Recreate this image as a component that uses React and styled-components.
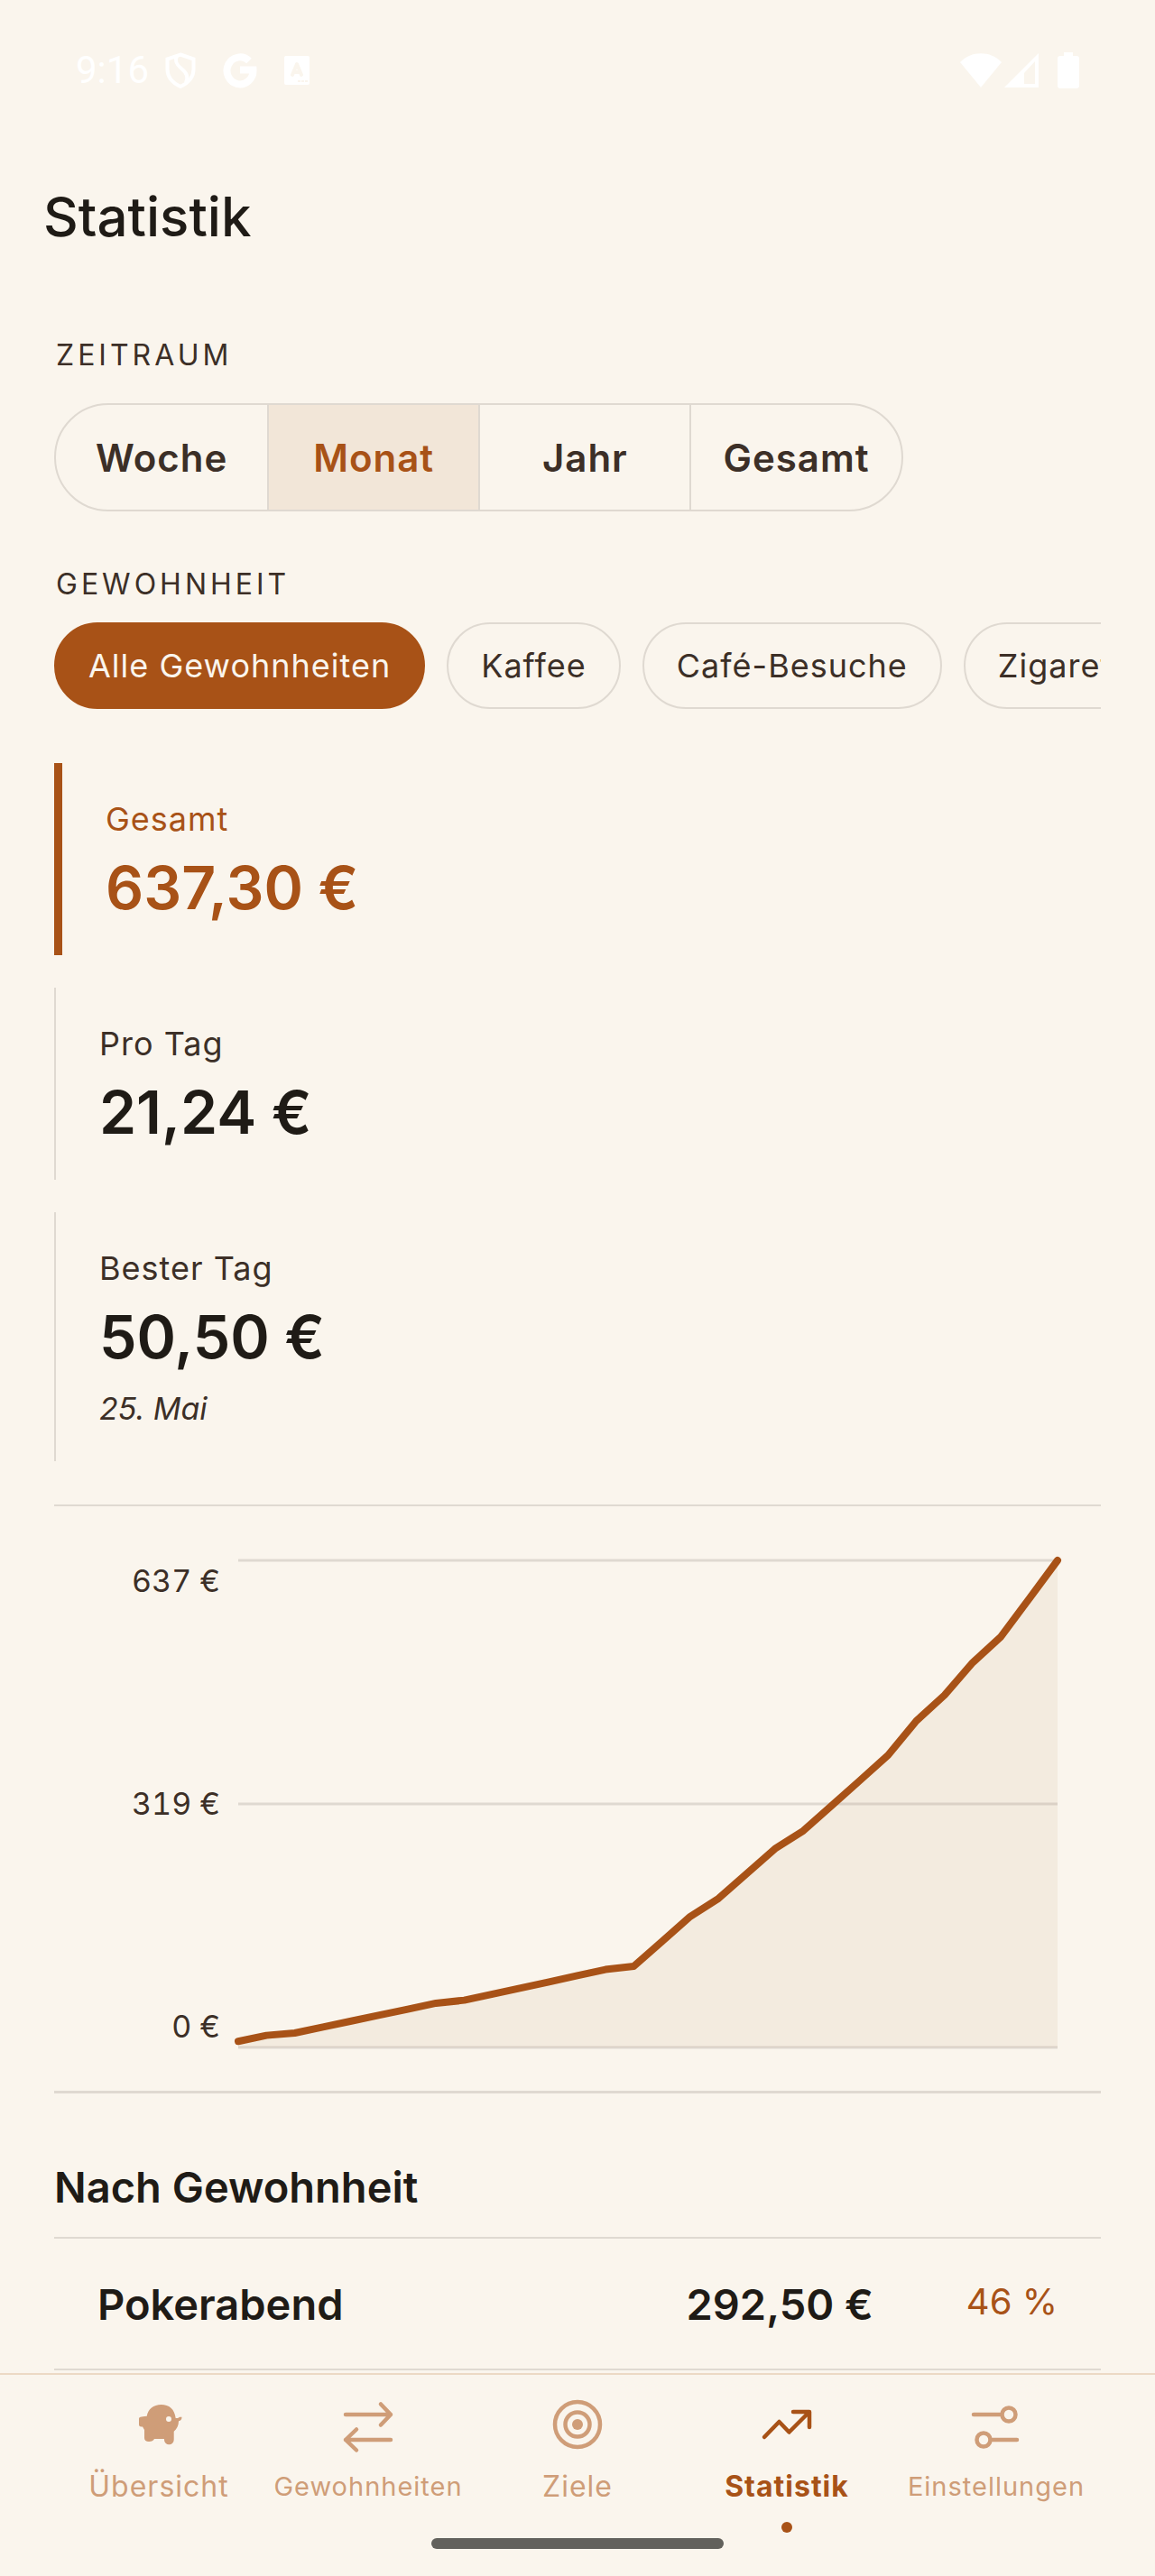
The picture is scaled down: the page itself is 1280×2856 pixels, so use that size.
import React, { useState } from 'react'
import styled, { createGlobalStyle, css } from 'styled-components'

const colors = {
  paper: '#faf5ed',
  ink: '#1f1b16',
  body: '#3c2f27',
  accent: '#a85217',
  accentMuted: '#cf9d78',
  accentTint: '#f2e6d8',
  area: '#be916b',
  line: '#dfd9d1',
  navLine: '#ecd9c5',
  white: '#fff',
}

const GlobalStyle = createGlobalStyle`
  *, *::before, *::after {
    box-sizing: border-box;
  }

  body {
    margin: 0;
    background: ${colors.paper};
    color: ${colors.ink};
    font-family: Inter, 'Liberation Sans', sans-serif;
  }

  h1, h2, p, dl, dt, dd {
    margin: 0;
  }

  button {
    font: inherit;
    color: inherit;
    background: none;
    border: 0;
    cursor: pointer;
  }
`

const Screen = styled.div`
  display: flex;
  flex-direction: column;
  height: 100vh;
  overflow: hidden;
`

// Status bar

const StatusBar = styled.header`
  flex: none;
  display: flex;
  justify-content: space-between;
  align-items: center;
  height: 156px;
  padding: 0 84px;
  color: ${colors.white};
`

const StatusGroup = styled.div`
  display: flex;
  align-items: center;
  gap: ${p => p.$gap}px;
`

const Clock = styled.time`
  font-family: Roboto, sans-serif;
  font-size: 42px;
  line-height: 48px;
`

const ShieldIcon = () => (
  <svg width="34" height="40" viewBox="0 0 34 40" fill="none" stroke="currentColor" strokeWidth="4">
    <path d="M17 2.500 31.500 7.500v11.500c0 9-6 15-14.500 19C8.500 34 2.500 28 2.500 19V7.500z" />
    <path d="M13 4c-3 6 0 10 5 14 6 5 8 9 5 16" />
  </svg>
)

const GoogleIcon = () => (
  <svg width="38" height="40" viewBox="0 0 38 40" fill="none" stroke="currentColor" strokeWidth="8">
    <path d="M29 9.500A14.500 15 0 1 0 33.500 19.500H19" />
  </svg>
)

const LetterIcon = () => (
  <svg width="28" height="32" viewBox="0 0 28 32">
    <rect width="28" height="32" rx="2" fill="currentColor" />
    <path d="M9 21l5-12 5 12M11 18h6" fill="none" stroke={colors.paper} strokeWidth="4" strokeLinecap="round" strokeLinejoin="round" />
    <path d="M15 28h11" stroke={colors.paper} strokeWidth="2" strokeDasharray="3 1" />
  </svg>
)

const WifiIcon = () => (
  <svg width="46" height="38" viewBox="0 0 46 38" fill="currentColor">
    <path d="M0 10C12-3 34-3 46 10L23 38z" />
  </svg>
)

const SignalIcon = () => (
  <svg width="38" height="38" viewBox="0 0 38 38" fill="currentColor" fillRule="evenodd">
    <path d="M38 0v38H0zM34 9 22 22v12h12z" />
  </svg>
)

const BatteryIcon = () => (
  <svg width="24" height="40" viewBox="0 0 24 40" fill="currentColor">
    <path d="M7 0h10v4h4a3 3 0 0 1 3 3v30a3 3 0 0 1-3 3H3a3 3 0 0 1-3-3V7a3 3 0 0 1 3-3h4z" />
  </svg>
)

// Content

const Title = styled.h1`
  flex: none;
  padding: 48px 48px 0;
  font-size: 60px;
  font-weight: 500;
  line-height: 72px;
`

const Content = styled.main`
  flex: 1;
  min-height: 0;
  overflow: hidden;
  padding: 94px 60px 0;
`

const Overline = styled.h2`
  padding-left: 2px;
  font-size: 32px;
  font-weight: 400;
  line-height: 48px;
  letter-spacing: 4px;
  text-transform: uppercase;
  color: ${colors.body};
`

const Segments = styled.div`
  display: grid;
  grid-template-columns: repeat(4, 1fr);
  width: max-content;
  height: 120px;
  margin: 29px 0 57px;
  border: 2px solid ${colors.line};
  border-radius: 60px;
  overflow: hidden;
`

const Segment = styled.button`
  padding: 0 35px;
  font-size: 42px;
  font-weight: 600;
  letter-spacing: 1px;
  color: ${colors.body};

  & + & {
    border-left: 2px solid ${colors.line};
  }

  ${p =>
    p.$active &&
    css`
      color: ${colors.accent};
      background: ${colors.accentTint};
    `}
`

const Chips = styled.div`
  display: flex;
  gap: 24px;
  margin: 18px 0 60px;
  overflow-x: auto;
  scrollbar-width: none;
`

const Chip = styled.button`
  flex: none;
  height: 96px;
  padding: 0 36px;
  border: 2px solid ${colors.line};
  border-radius: 48px;
  font-size: 36px;
  letter-spacing: 1px;
  color: ${colors.body};
  white-space: nowrap;

  ${p =>
    p.$active &&
    css`
      color: ${colors.paper};
      background: ${colors.accent};
      border-color: ${colors.accent};
    `}
`

const Stats = styled.dl`
  display: flex;
  flex-direction: column;
  gap: 36px;
`

const Stat = styled.div`
  padding: 38px 48px 33px;
  border-left: 2px solid ${colors.line};
  color: ${colors.ink};

  ${p =>
    p.$accent &&
    css`
      border-left: 9px solid ${colors.accent};
      color: ${colors.accent};
    `}
`

const StatLabel = styled.dt`
  font-size: 36px;
  line-height: 48px;
  letter-spacing: 1px;
  color: ${p => (p.$accent ? colors.accent : colors.body)};
`

const StatValue = styled.dd`
  padding-top: 10px;
  font-size: 66px;
  font-weight: 600;
  line-height: 84px;
`

const StatNote = styled.dd`
  padding-top: 13px;
  font-size: 34px;
  font-style: italic;
  line-height: 50px;
  color: ${colors.body};
`

const ChartPanel = styled.section`
  display: flex;
  gap: 20px;
  margin-top: 48px;
  padding: 59px 48px 47px;
  border-top: 2px solid ${colors.line};
  border-bottom: 3px solid ${colors.line};
`

const ChartLabels = styled.div`
  display: flex;
  flex-direction: column;
  justify-content: space-between;
  width: 136px;
  font-size: 34px;
  font-variant-numeric: tabular-nums;
  line-height: 48px;
  text-align: right;
  white-space: nowrap;
  color: ${colors.body};
`

const ChartCanvas = styled.svg`
  flex: 1;
  min-width: 0;
  height: 542px;
  overflow: visible;
`

const SectionTitle = styled.h2`
  padding: 74px 0 25px;
  font-size: 47px;
  font-weight: 600;
  line-height: 60px;
`

const HabitTable = styled.table`
  width: 100%;
  border-collapse: collapse;

  tr {
    height: 146px;
    border-top: 2px solid ${colors.line};
    border-bottom: 2px solid ${colors.line};
  }

  th,
  td {
    padding: 0;
    font-size: 47px;
    font-weight: 600;
    text-align: right;
    white-space: nowrap;
  }

  th {
    padding-left: 48px;
    text-align: left;
  }

  td:last-child {
    width: 252px;
    padding-right: 48px;
    padding-bottom: 6px;
    font-size: 40px;
    font-weight: 400;
    color: ${colors.accent};
  }
`

// Bottom navigation

const NavBar = styled.nav`
  flex: none;
  border-top: 2px solid ${colors.navLine};
  padding: 0 60px 30px;
`

const NavList = styled.div`
  display: grid;
  grid-template-columns: repeat(5, minmax(0, 1fr));
`

const NavLink = styled.a`
  display: flex;
  flex-direction: column;
  align-items: center;
  padding-top: 20px;
  font-size: ${p => (p.$small ? 29 : 32)}px;
  font-weight: ${p => (p.$active ? 700 : 400)};
  line-height: 48px;
  letter-spacing: 1px;
  text-decoration: none;
  white-space: nowrap;
  color: ${p => (p.$active ? colors.accent : colors.accentMuted)};

  svg {
    margin-bottom: 8px;
  }
`

const ActiveDot = styled.span`
  width: 12px;
  height: 12px;
  margin-top: 15px;
  border-radius: 50%;
  background: ${p => (p.$active ? colors.accent : 'transparent')};
`

const HomeHandle = styled.div`
  width: 324px;
  height: 12px;
  margin: 6px auto 0;
  border-radius: 6px;
  background: #62615c;
`

const NavIcon = ({ children }) => (
  <svg
    width="72"
    height="72"
    viewBox="0 0 72 72"
    fill="none"
    stroke="currentColor"
    strokeWidth="4.500"
    strokeLinecap="round"
    strokeLinejoin="round"
  >
    {children}
  </svg>
)

const PiggyIcon = () => (
  <NavIcon>
    <path
      d="M22.700 25.700C24 18 30 13 38.700 13S53.500 18 54.700 28c2 .3 3.300-.2 4.300-1.300l2.500 0c0 2.500-1 4-3.500 4.500 0 5-2 8.500-5.300 11.500V52a5.300 5.300 0 0 1-10.700 0v-1H31c-1 2-3 3-6 3s-5-1.500-5-4V41l-2-3.500c-3 0-4-.5-4-2.500v-6c0-2.500 2-2.500 8.700-3.300z"
      fill="currentColor"
      stroke="none"
    />
    <circle cx="47" cy="29" r="3" fill={colors.paper} stroke="none" />
  </NavIcon>
)

const SwapIcon = () => (
  <NavIcon>
    <path d="M11 24h50M50 12.500l11 11.500-11 11.500M61 52H11M23 40.500 11 52l12 11.500" />
  </NavIcon>
)

const TargetIcon = () => (
  <NavIcon>
    <circle cx="36" cy="35" r="25" />
    <circle cx="36" cy="35" r="13.500" />
    <circle cx="36" cy="35" r="6" fill="currentColor" stroke="none" />
  </NavIcon>
)

const TrendIcon = () => (
  <NavIcon>
    <path d="M11 49 27.500 32 38.500 43.500 60 22M43 21H61V38" />
  </NavIcon>
)

const SlidersIcon = () => (
  <NavIcon>
    <path d="M11 24H42M30 52H59" />
    <circle cx="50" cy="24" r="7.500" />
    <circle cx="22" cy="52" r="7.500" />
  </NavIcon>
)

const periods = ['Woche', 'Monat', 'Jahr', 'Gesamt']
const habits = ['Alle Gewohnheiten', 'Kaffee', 'Café-Besuche', 'Zigaretten']

const navItems = [
  { label: 'Übersicht', icon: PiggyIcon },
  { label: 'Gewohnheiten', icon: SwapIcon, small: true },
  { label: 'Ziele', icon: TargetIcon },
  { label: 'Statistik', icon: TrendIcon, active: true },
  { label: 'Einstellungen', icon: SlidersIcon, small: true },
]

// Running total per day of the month
const totals = [
  8, 15.8, 18.9, 26.7, 34.5, 42.3, 50.1, 57.9, 61.8, 69.8, 77.8, 85.8, 94, 102,
  106.3, 138.8, 171.3, 194.9, 227.4, 260, 283.5, 316.3, 349.2, 382.3, 427.3,
  461, 503.7, 537.6, 587.4, 637.3,
]

const Chart = () => {
  const max = totals[totals.length - 1]
  const line = totals
    .map((v, i) => `${(i / (totals.length - 1)) * 908},${541 - (v / max) * 540}`)
    .join(' ')

  return (
    <ChartPanel aria-label="Verlauf">
      <ChartLabels>
        <span>637 €</span>
        <span>319 €</span>
        <span>0 €</span>
      </ChartLabels>
      <ChartCanvas viewBox="0 0 908 542" preserveAspectRatio="none">
        {[1, 271, 541].map(y => (
          <path key={y} d={`M0 ${y}H908`} stroke={colors.line} strokeWidth="3" />
        ))}
        <polygon points={`0,541 ${line} 908,541`} fill={colors.area} fillOpacity="0.1" />
        <polyline
          points={line}
          fill="none"
          stroke={colors.accent}
          strokeWidth="8"
          strokeLinecap="round"
          strokeLinejoin="round"
          vectorEffect="non-scaling-stroke"
        />
      </ChartCanvas>
    </ChartPanel>
  )
}

const App = () => {
  const [period, setPeriod] = useState('Monat')
  const [habit, setHabit] = useState(habits[0])

  return (
    <Screen>
      <GlobalStyle />
      <StatusBar>
        <StatusGroup $gap={18}>
          <Clock>9:16</Clock>
          <StatusGroup $gap={30}>
            <ShieldIcon />
            <GoogleIcon />
            <LetterIcon />
          </StatusGroup>
        </StatusGroup>
        <StatusGroup $gap={3}>
          <WifiIcon />
          <StatusGroup $gap={21}>
            <SignalIcon />
            <BatteryIcon />
          </StatusGroup>
        </StatusGroup>
      </StatusBar>

      <Title>Statistik</Title>

      <Content>
        <Overline>Zeitraum</Overline>
        <Segments>
          {periods.map(p => (
            <Segment key={p} $active={p === period} onClick={() => setPeriod(p)}>
              {p}
            </Segment>
          ))}
        </Segments>

        <Overline>Gewohnheit</Overline>
        <Chips>
          {habits.map(h => (
            <Chip key={h} $active={h === habit} onClick={() => setHabit(h)}>
              {h}
            </Chip>
          ))}
        </Chips>

        <Stats>
          <Stat $accent>
            <StatLabel $accent>Gesamt</StatLabel>
            <StatValue>637,30 €</StatValue>
          </Stat>
          <Stat>
            <StatLabel>Pro Tag</StatLabel>
            <StatValue>21,24 €</StatValue>
          </Stat>
          <Stat>
            <StatLabel>Bester Tag</StatLabel>
            <StatValue>50,50 €</StatValue>
            <StatNote>25. Mai</StatNote>
          </Stat>
        </Stats>

        <Chart />

        <SectionTitle>Nach Gewohnheit</SectionTitle>
        <HabitTable>
          <tbody>
            <tr>
              <th scope="row">Pokerabend</th>
              <td>292,50 €</td>
              <td>46 %</td>
            </tr>
          </tbody>
        </HabitTable>
      </Content>

      <NavBar>
        <NavList>
          {navItems.map(({ label, icon: Icon, active, small }) => (
            <NavLink key={label} href="#" $active={active} $small={small}>
              <Icon />
              {label}
              <ActiveDot $active={active} />
            </NavLink>
          ))}
        </NavList>
        <HomeHandle />
      </NavBar>
    </Screen>
  )
}

export default App
